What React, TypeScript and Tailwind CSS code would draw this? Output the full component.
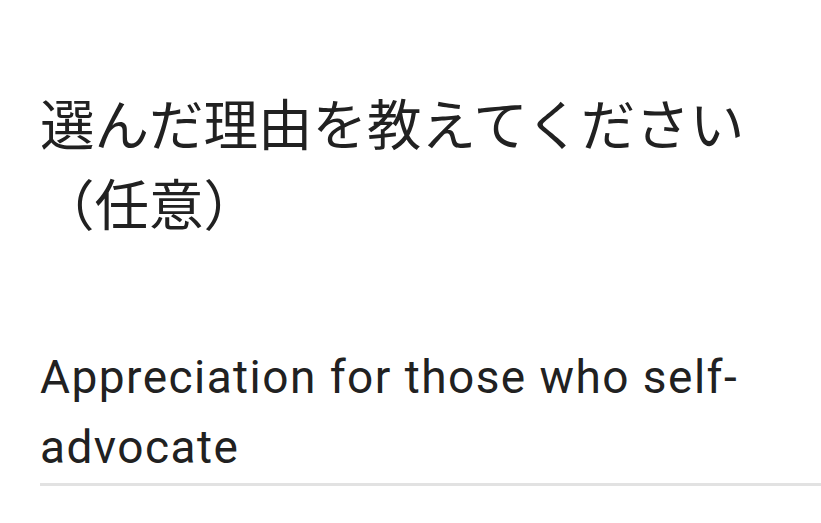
export default function App() {
  return (
    <div className="w-[821px] h-[523px] bg-white overflow-hidden pl-[40px] flex flex-col">
      <h1 className="pt-[82px] text-[54.5px] leading-[80px] font-normal text-[#212121] font-['Noto_Sans_CJK_JP','Noto_Sans',sans-serif]">
        選んだ理由を教えてください（任意）
      </h1>
      <p className="mt-[100px] text-[46px] leading-[70px] tracking-[1.45px] text-[#212121] border-b-[3px] border-[#e2e2e2] pb-[1px] font-['Roboto','Noto_Sans',sans-serif]">
        Appreciation for those who self-advocate
      </p>
    </div>
  );
}
